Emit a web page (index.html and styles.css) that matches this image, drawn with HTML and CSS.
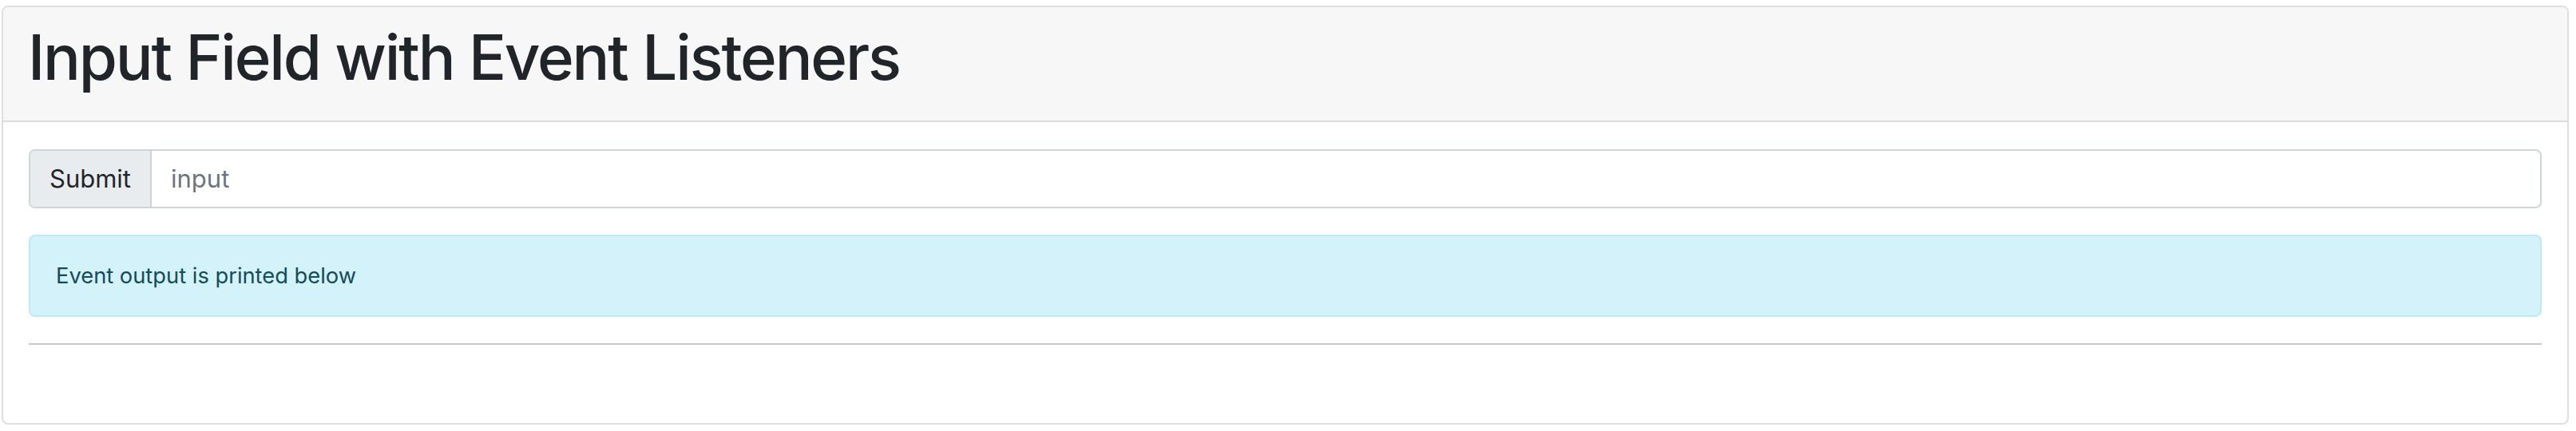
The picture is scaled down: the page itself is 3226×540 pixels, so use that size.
FILE: index.html
```html
<!DOCTYPE html>
<html lang="en">
<head>
<meta charset="utf-8">
<title>Input Field with Event Listeners</title>
<link rel="stylesheet" href="styles.css">
</head>
<body>
  <div class="card">
    <div class="card-header">
      <h1 class="title">Input Field with Event Listeners</h1>
    </div>
    <div class="card-body">
      <div class="input-group">
        <span class="addon">Submit</span>
        <input class="field" type="text" placeholder="input">
      </div>
      <div class="alert">Event output is printed below</div>
      <hr class="divider">
      <div class="output"></div>
    </div>
  </div>
</body>
</html>
```

FILE: styles.css
```css
* { box-sizing: border-box; }

html, body {
  margin: 0;
  background: #ffffff;
}

body {
  padding: 7px 9px 8px 2px;
  font-family: Inter, "Liberation Sans", sans-serif;
  color: #212529;
}

.card {
  border: 2px solid #dfdfdf;
  border-radius: 8px;
  overflow: hidden;
  background: #ffffff;
}

.card-header {
  background: #f7f7f7;
  border-bottom: 2px solid #dcdcdc;
  padding: 16px 31px;
}

.title {
  margin: 0 0 16px 0;
  font-size: 78px;
  line-height: 94px;
  font-weight: 500;
  color: #212529;
  letter-spacing: -2.2px;
}

.card-body {
  padding: 34px 32px 32px 32px;
}

.input-group {
  display: flex;
  border: 2px solid #ced4da;
  border-radius: 8px;
  overflow: hidden;
}

.addon {
  background: #e9ecef;
  border-right: 2px solid #ced4da;
  padding: 12px 24px;
  font-size: 31px;
  line-height: 46px;
  color: #212529;
}

.field {
  flex: 1;
  border: 0;
  outline: none;
  padding: 12px 24px;
  font-family: inherit;
  font-size: 31px;
  line-height: 46px;
  color: #212529;
  background: #ffffff;
}

.field::placeholder {
  color: #6c757d;
}

.alert {
  margin-top: 33px;
  background: #d4f2fa;
  border: 2px solid #bcebf8;
  border-radius: 8px;
  padding: 30px 32px;
  font-size: 27.3px;
  line-height: 39px;
  color: #124c5b;
}

.divider {
  margin: 33px 0 31px 0;
  border: 0;
  border-top: 2px solid #c6c7c8;
}

.output {
  height: 35px;
}
```
